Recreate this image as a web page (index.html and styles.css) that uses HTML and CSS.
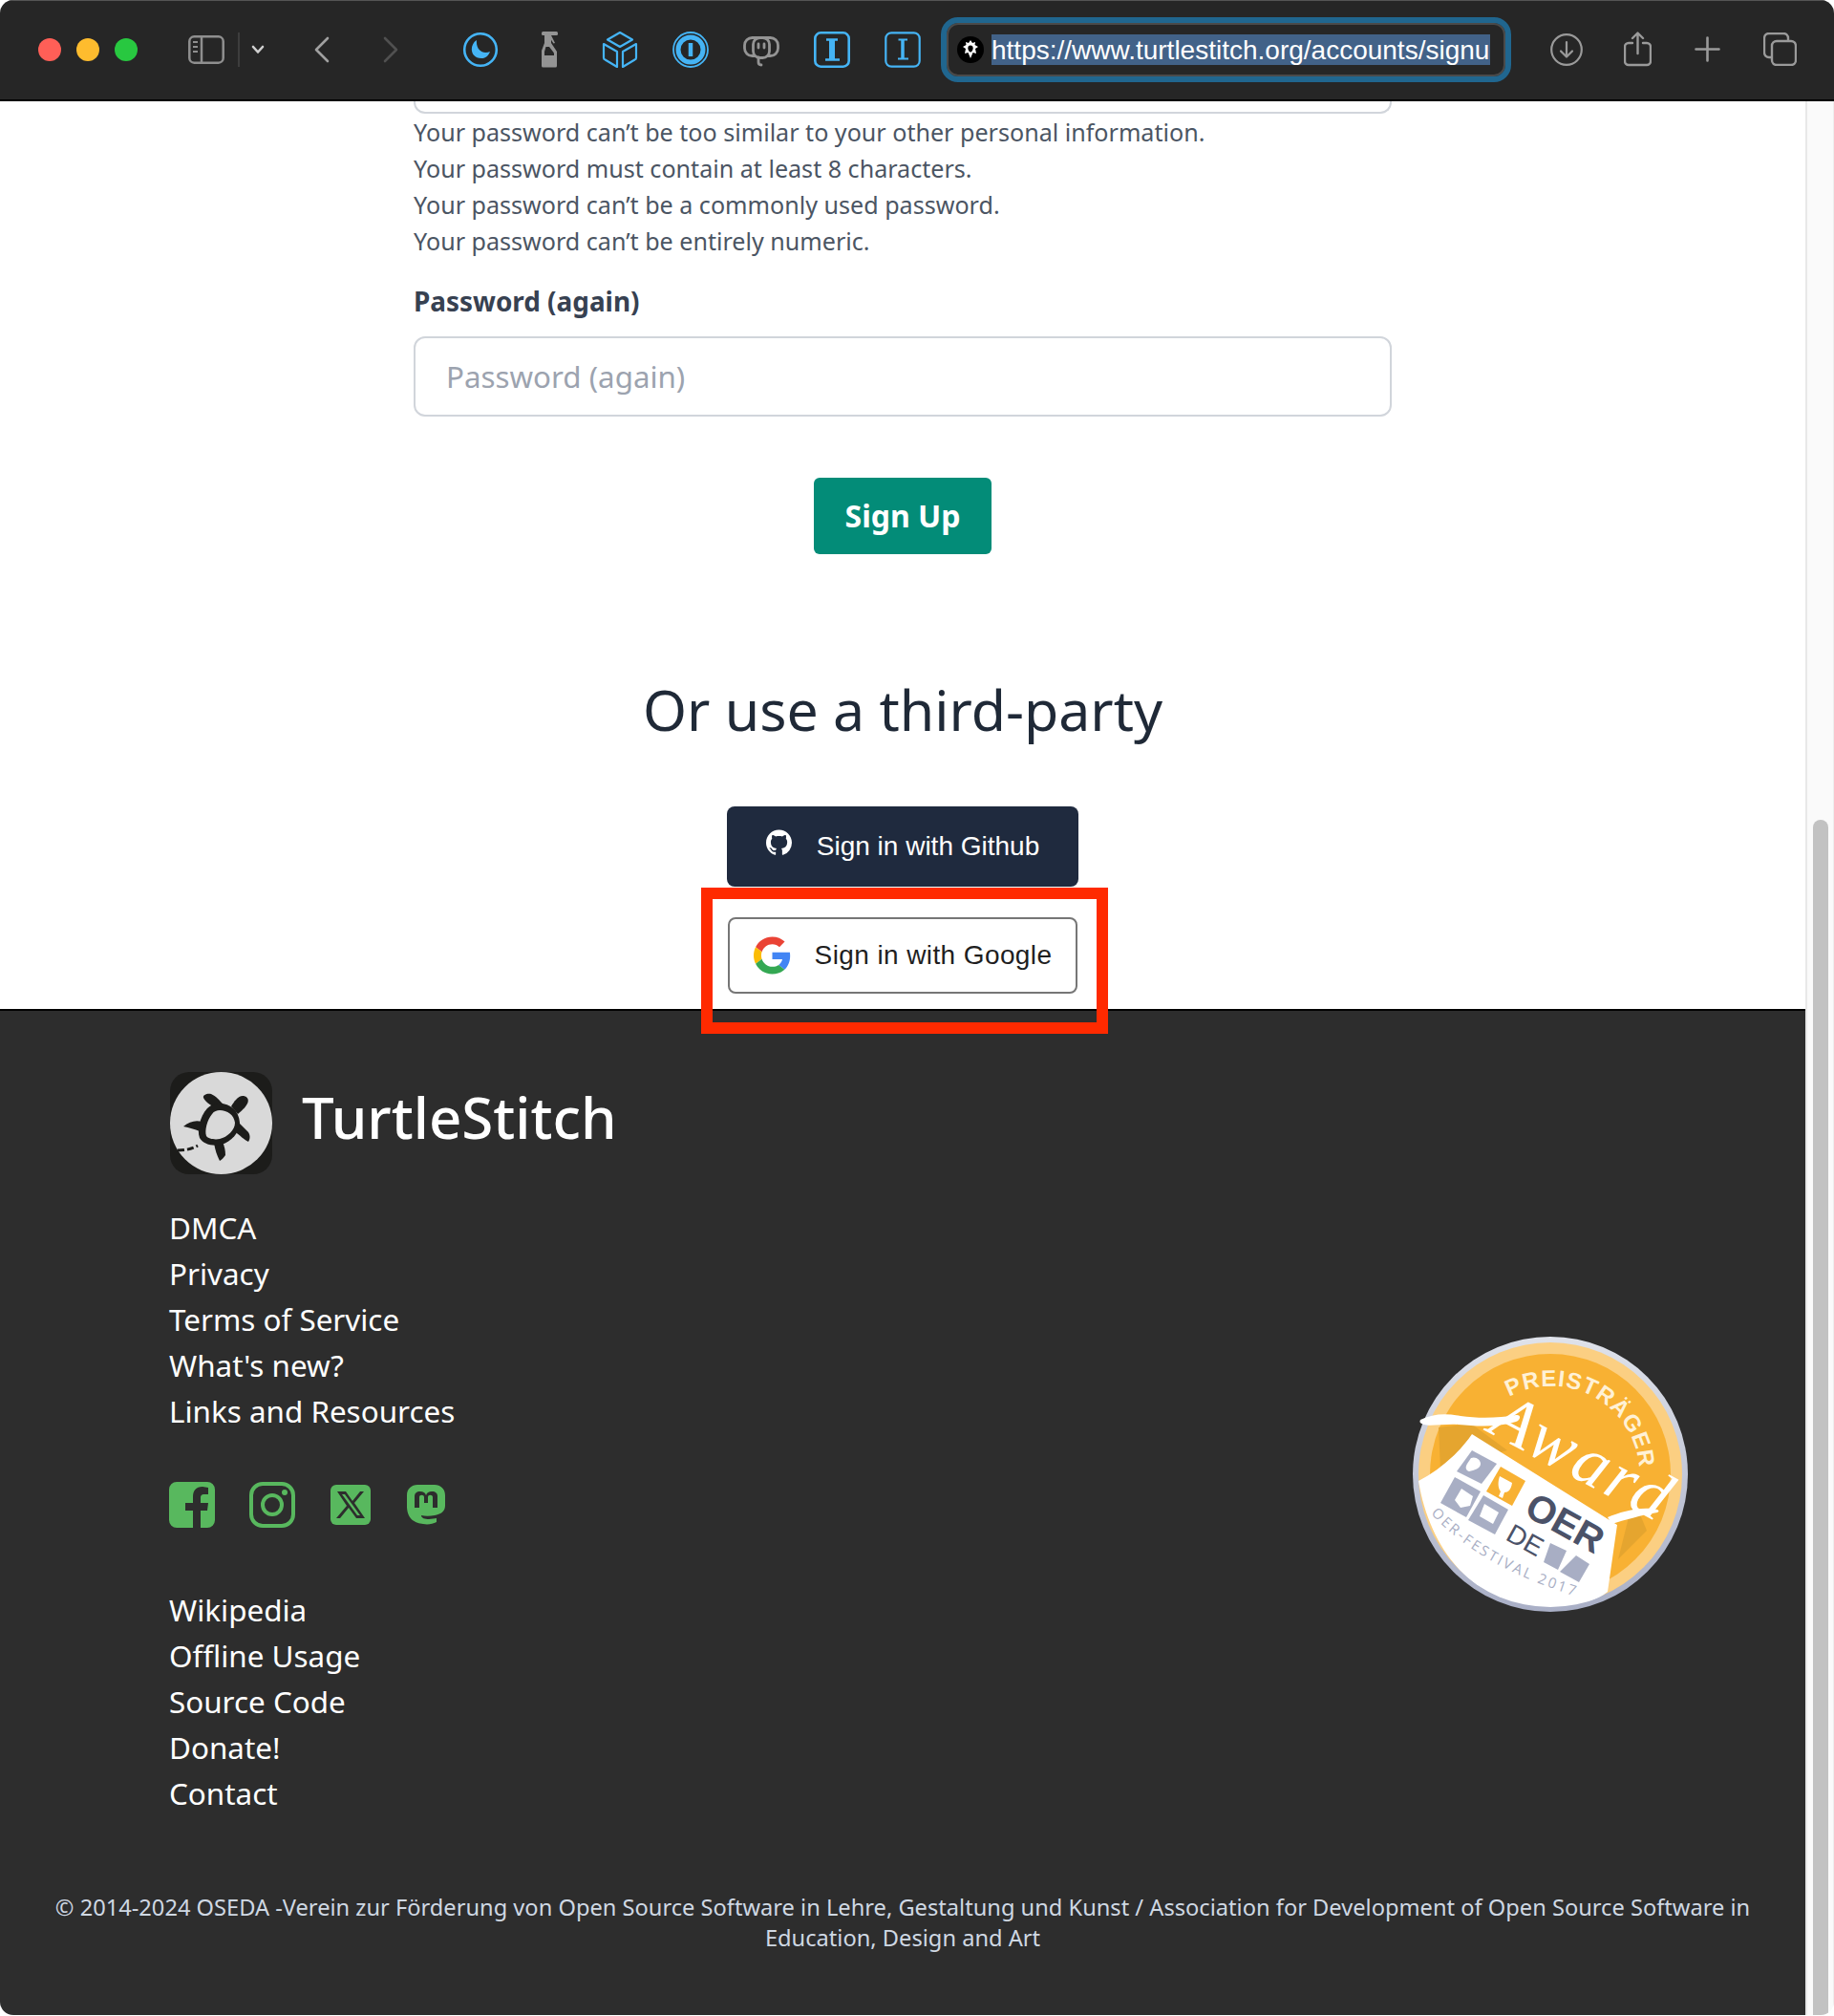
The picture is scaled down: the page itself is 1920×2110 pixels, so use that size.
FILE: index.html
```html
<!DOCTYPE html>
<html lang="en">
<head>
<meta charset="utf-8">
<title>TurtleStitch sign up</title>
<link rel="stylesheet" href="styles.css">
</head>
<body>
<div class="window">
  <header class="toolbar">
    <div class="lights"><span class="light red"></span><span class="light yellow"></span><span class="light green"></span></div>
    <svg class="ic-sidebar" width="38" height="30" viewBox="0 0 38 30" fill="none" stroke="#8f8f8f" stroke-width="2.500"><rect x="1.300" y="1.300" width="35.400" height="27.400" rx="5"/><path d="M14 1v28"/><path d="M5 7h5M5 12h5M5 17h5" stroke-width="2"/></svg>
    <span class="tb-sep"></span>
    <svg class="ic-chev" width="14" height="10" viewBox="0 0 14 10" fill="none" stroke="#d0d0d0" stroke-width="2.600" stroke-linecap="round" stroke-linejoin="round"><path d="M2 2l5 5.500L12 2"/></svg>
    <svg class="ic-back" width="16" height="28" viewBox="0 0 16 28" fill="none" stroke="#a0a0a0" stroke-width="2.600" stroke-linecap="round" stroke-linejoin="round"><path d="M14 2L2 14l12 12"/></svg>
    <svg class="ic-fwd" width="16" height="28" viewBox="0 0 16 28" fill="none" stroke="#505050" stroke-width="2.600" stroke-linecap="round" stroke-linejoin="round"><path d="M2 2l12 12L2 26"/></svg>
    <div class="tb-ext">
      <svg width="38" height="38" viewBox="0 0 38 38" fill="none"><circle cx="19" cy="19" r="16.800" stroke="#45b4f5" stroke-width="2.600"/><path d="M15 9C7 14 8 28 20 28c4 0 7-2 9-7-7 3-15-1-14-12z" fill="#45b4f5"/></svg>
      <svg class="ic-bottle" width="38" height="38" viewBox="0 0 38 38" fill="#949494"><rect x="11" y="0" width="17" height="4" rx="1.500"/><rect x="14" y="4" width="7" height="9"/><path d="M21 4l4 8-1.500.5-4-6z"/><path d="M14 12h7l6 9v15a1.500 1.500 0 0 1-1.500 1.500h-13A1.500 1.500 0 0 1 11 36V20z"/><path d="M15.500 16h3.500l5 6.500V34H14v-13z" fill="#262626"/><path d="M14 25h10v9H14z"/></svg>
      <svg width="38" height="38" viewBox="0 0 38 38" fill="none" stroke="#45b4f5" stroke-width="2.200" stroke-linejoin="round"><path d="M19 1l13 7.500L19 16 6 8.500zM2 13l14 8v16L3.500 29.500a2 2 0 0 1-1.500-2zM36 13l-14 8v16l12.500-7.500a2 2 0 0 0 1.500-2z"/></svg>
      <svg width="38" height="38" viewBox="0 0 38 38" fill="none" stroke="#45b4f5"><circle cx="19" cy="19" r="18" stroke-width="1.800"/><circle cx="19" cy="19" r="13" stroke-width="5"/><path d="M19 12v14" stroke-width="4.500"/></svg>
      <svg width="38" height="38" viewBox="0 0 38 38" fill="none" stroke="#949494" stroke-width="2.800" stroke-linecap="round"><rect x="1.500" y="6.500" width="35" height="19" rx="8"/><rect x="10.500" y="6.500" width="17" height="21" rx="7" fill="#262626"/><path d="M16 13v4M22 13v4M16 27v5q0 3 3 3"/></svg>
      <svg width="38" height="38" viewBox="0 0 38 38" fill="none"><rect x="1.300" y="1.300" width="35.400" height="35.400" rx="6" stroke="#45b4f5" stroke-width="2.600"/><path d="M13 8.500h12M12 29.500h15M19 8v22" stroke="#45b4f5" stroke-width="2.500"/><path d="M19 8v22" stroke="#45b4f5" stroke-width="6"/></svg>
      <svg width="38" height="38" viewBox="0 0 38 38" fill="none"><rect x="1.300" y="1.300" width="35.400" height="35.400" rx="6" stroke="#45b4f5" stroke-width="2.200"/><path d="M14.500 8.500h9.500M14 28.500h11" stroke="#45b4f5" stroke-width="2"/><path d="M19 8v21" stroke="#45b4f5" stroke-width="3.500"/></svg>
    </div>
    <div class="urlbar">
      <svg class="favicon" width="28" height="30" viewBox="0 0 28 30"><circle cx="14" cy="15" r="14" fill="#000"/><path d="M14 5l2 3 3-1-.5 3 3.500 2-3 2 1 5-3.500-1L14 24l-2.500-6-3.500 1 1-5-3-2 3.500-2L9 7l3 1z" fill="#fff"/><path d="M14 10.500c2.500 0 3 2 2.500 4s-1.500 3-2.500 3-2-1-2.500-3 0-4 2.500-4z" fill="#000"/></svg>
      <span class="url"><span class="url-text">https://www.turtlestitch.org/accounts/signup/</span></span>
    </div>
    <svg class="ic-dl" width="34" height="34" viewBox="0 0 34 34" fill="none" stroke="#9a9a9a" stroke-width="2.200" stroke-linecap="round" stroke-linejoin="round"><circle cx="17" cy="17" r="15.800"/><path d="M17 9v15M11 18.500l6 6 6-6"/></svg>
    <svg class="ic-share" width="29" height="37" viewBox="0 0 29 37" fill="none" stroke="#9a9a9a" stroke-width="2.400" stroke-linecap="round" stroke-linejoin="round"><path d="M9 12H5a4 4 0 0 0-4 4v15a4 4 0 0 0 4 4h19a4 4 0 0 0 4-4V16a4 4 0 0 0-4-4h-4"/><path d="M14.500 23V2M9 7l5.500-5.500L20 7"/></svg>
    <svg class="ic-plus" width="27" height="27" viewBox="0 0 27 27" fill="none" stroke="#9a9a9a" stroke-width="2.600" stroke-linecap="round"><path d="M13.500 1.500v24M1.500 13.500h24"/></svg>
    <svg class="ic-tabs" width="35" height="35" viewBox="0 0 35 35" fill="none" stroke="#9a9a9a" stroke-width="2.400"><rect x="9" y="9" width="25" height="25" rx="5"/><path d="M8.500 26H6a5 5 0 0 1-5-5V6a5 5 0 0 1 5-5h15a5 5 0 0 1 5 5v2.500"/></svg>
  </header>
  <div class="viewport">
    <div class="page">
      <main class="content">
        <div class="form">
          <div class="input-stub"></div>
          <ul class="help">
            <li>Your password can’t be too similar to your other personal information.</li>
            <li>Your password must contain at least 8 characters.</li>
            <li>Your password can’t be a commonly used password.</li>
            <li>Your password can’t be entirely numeric.</li>
          </ul>
          <label class="label" for="pw2">Password (again)</label>
          <input class="input" id="pw2" type="password" placeholder="Password (again)">
          <div class="submit-row"><button class="signup" type="button">Sign Up</button></div>
        </div>
        <h2 class="third">Or use a third-party</h2>
        <div class="socials">
          <a class="btn-github">
            <svg class="gh-mark" width="27" height="28" viewBox="0 0 16 16" fill="#fff"><path d="M8 0C3.580 0 0 3.580 0 8c0 3.540 2.290 6.530 5.470 7.590.4.070.55-.17.550-.38 0-.19-.01-.82-.01-1.490-2.010.37-2.530-.49-2.690-.94-.09-.23-.48-.94-.82-1.130-.28-.15-.68-.52-.01-.53.630-.01 1.080.58 1.230.82.720 1.210 1.870.87 2.330.66.070-.52.280-.87.510-1.070-1.780-.2-3.640-.89-3.640-3.950 0-.87.310-1.590.820-2.150-.08-.2-.36-1.020.08-2.120 0 0 .67-.21 2.200.82.640-.18 1.320-.27 2-.27s1.360.09 2 .27c1.530-1.040 2.200-.82 2.200-.82.440 1.100.160 1.920.080 2.120.51.560.82 1.270.82 2.150 0 3.070-1.870 3.750-3.650 3.950.29.250.54.730.54 1.480 0 1.070-.01 1.930-.01 2.200 0 .21.150.46.550.38A8.010 8.010 0 0 0 16 8c0-4.420-3.580-8-8-8z"/></svg>
            <span>Sign in with Github</span>
          </a>
          <span class="highlight">
            <a class="btn-google">
              <svg width="39" height="40" viewBox="0 0 48 48"><path fill="#EA4335" d="M24 9.500c3.540 0 6.710 1.220 9.210 3.600l6.850-6.850C35.900 2.380 30.470 0 24 0 14.620 0 6.510 5.380 2.560 13.220l7.980 6.190C12.430 13.720 17.740 9.500 24 9.500z"/><path fill="#4285F4" d="M46.980 24.550c0-1.570-.15-3.090-.38-4.550H24v9.020h12.940c-.58 2.960-2.260 5.480-4.780 7.180l7.730 6c4.510-4.180 7.090-10.360 7.090-17.650z"/><path fill="#FBBC05" d="M10.530 28.590c-.48-1.450-.76-2.990-.76-4.590s.27-3.140.76-4.590l-7.980-6.190C.92 16.460 0 20.120 0 24c0 3.880.92 7.540 2.560 10.780l7.970-6.190z"/><path fill="#34A853" d="M24 48c6.480 0 11.930-2.130 15.890-5.810l-7.730-6c-2.150 1.450-4.920 2.300-8.160 2.300-6.260 0-11.570-4.220-13.470-9.910l-7.980 6.190C6.510 42.620 14.620 48 24 48z"/></svg>
              <span>Sign in with Google</span>
            </a>
          </span>
        </div>
      </main>
      <footer class="footer">
        <div class="foot-main">
          <div class="foot-left">
            <div class="brand">
              <svg class="logo" width="107" height="107" viewBox="0 0 107 107">
                <rect width="107" height="107" rx="20" fill="#1c1c1a"/>
                <circle cx="53.500" cy="53.500" r="53.500" fill="#d9d9d9"/>
                <g fill="#1c1c1a">
                  <path d="M35 27c-1-3 4-5 8-4 5 2 9 7 13 11l-6 5c-5-3-13-7-15-12z"/>
                  <path d="M64 36c3-5 7-11 12-11 5 0 7 4 5 8-3 5-6 8-10 11z"/>
                  <path d="M71 52l11 11c2 3 2 7 0 10-5-3-10-7-14-11z"/>
                  <path d="M46 74l9-1c2 5 3 9 3 14-2 3-4 5-6 6-3-6-5-12-6-19z"/>
                  <path d="M33 52c-6-2-13 0-19 5 6 1 12 3 17 5z"/>
                  <path d="M52 33c11 0 20 7 21 20 0 10-9 20-19 23-9 2-19 0-23-7-3-8 0-22 8-31 4-4 9-5 13-5z"/>
                </g>
                <path d="M52 40c8 0 15 5 16 13 0 8-8 15-16 17-5 1-12 0-14-3-2-6 1-17 6-23 2-3 5-4 8-4z" fill="#d9d9d9"/>
                <path d="M8 82c7 0 14-1 21-5" fill="none" stroke="#1c1c1a" stroke-width="3" stroke-dasharray="7 3"/>
              </svg>
              <span class="brand-name">TurtleStitch</span>
            </div>
            <ul class="links">
              <li>DMCA</li><li>Privacy</li><li>Terms of Service</li><li>What's new?</li><li>Links and Resources</li>
            </ul>
            <div class="social-icons">
              <svg width="48" height="48" viewBox="0 0 48 48"><path fill="#58b85e" d="M8 0h32a8 8 0 0 1 8 8v32a8 8 0 0 1-8 8h-7V30h7l1-8h-8v-5c0-3 1-4 4-4h4V6c-2 0-4-1-6-1-7 0-10 4-10 11v6h-8v8h8v18H8a8 8 0 0 1-8-8V8a8 8 0 0 1 8-8z"/></svg>
              <svg width="48" height="48" viewBox="0 0 48 48" fill="none" stroke="#58b85e" stroke-width="4"><rect x="2" y="2" width="44" height="44" rx="12"/><circle cx="24" cy="24" r="10"/><circle cx="37" cy="11" r="3" fill="#58b85e" stroke="none"/></svg>
              <svg class="ic-x" width="42" height="42" viewBox="0 0 42 42"><rect width="42" height="42" rx="6" fill="#58b85e"/><path d="M7 7h9l7 10 8-10h4L25 19l11 16h-9l-8-11-9 11H6l11-13z M12 10l16 22h3L15 10z" fill="#2d2d2d" fill-rule="evenodd"/></svg>
              <svg class="ic-masto" width="40" height="42" viewBox="0 0 40 42"><path fill="#58b85e" d="M11 0h18c6 0 11 4 11 11v11c0 6-5 9-11 10-5 1-10 1-14 0 0 3 4 4 8 4 3 0 6-1 8-1v4c-4 2-9 3-14 2C9 40 1 37 0 24V11C0 4 5 0 11 0z"/><path fill="#2d2d2d" d="M8 24V12c0-3 2-5 6-5 3 0 5 1 6 4 1-3 3-4 6-4 4 0 6 2 6 5v12h-5V13c0-3-5-3-5 0v6h-4v-6c0-3-5-3-5 0v11z"/></svg>
            </div>
            <ul class="links second">
              <li>Wikipedia</li><li>Offline Usage</li><li>Source Code</li><li>Donate!</li><li>Contact</li>
            </ul>
          </div>
          <svg class="badge" width="290" height="290" viewBox="0 0 290 290">
            <defs>
              <path id="arcp" d="M102 64A92 92 0 0 1 238 150"/>
              <path id="arcf" d="M20 186Q70 242 176 274"/>
              <clipPath id="cc"><circle cx="145" cy="145" r="139"/></clipPath>
              <linearGradient id="rim" x1="0" y1="0" x2="0" y2="1"><stop offset="0" stop-color="#dfe2ea"/><stop offset="1" stop-color="#a9afc6"/></linearGradient>
            </defs>
            <circle cx="145" cy="145" r="144" fill="url(#rim)"/>
            <circle cx="145" cy="145" r="138" fill="#fbcf82"/>
            <circle cx="145" cy="145" r="126" fill="#f8b133"/>
            <path d="M28 96L62 92 100 120 30 140z" fill="#e5a52f"/>
            <path d="M232 170l14 34-30 30z" fill="#e5a52f"/>
            <path clip-path="url(#cc)" d="M7 152C30 140 50 122 63 103L215 198 205 268C190 280 165 285 145 285 70 285 20 230 7 152z" fill="#fff"/>
            <text class="badge-arc" fill="#fff1d6"><textPath href="#arcp">PREISTRÄGER</textPath></text>
            <path d="M9 88c12-6 26-7 42-4 20 3 42 2 58-1 6-1 5 5 0 7-20 6-40 5-60 3-14-1-30 2-36 0-5-1-5-3-4-5z" fill="#fff"/>
            <path d="M205 190c14-6 36-12 52-8 2 1 2 2 0 3-18 3-34 8-48 12z" fill="#fff"/>
            <text class="badge-script" transform="translate(78 100) rotate(28)" fill="#fff">Award</text>
            <polygon points="63,120 89,134 73,155 47,142" fill="#a8aec4"/>
            <polygon points="93,137 119,152 105,178 78,163" fill="#f8b133"/>
            <polygon points="45,148 72,163 57,190 30,175" fill="#a8aec4"/>
            <polygon points="75,167 101,182 87,208 59,193" fill="#a8aec4"/>
            <path d="M62 128c5-2 10 2 10 6 0 5-7 7-12 8-4-1-4-5-2-8z" fill="#fff"/>
            <path d="M92 147l13 7c-1 7-4 10-8 10l-2 6-4-2 2-5c-3-4-3-10-1-16z" fill="#fff"/>
            <path d="M52 160l12 8-3 10-10 2-6-8z" fill="#fff"/>
            <path d="M76 176l15 9-6 12-14-8z" fill="#fff"/>
            <text class="badge-oer" transform="translate(116 187) rotate(29)" fill="#4b5268">OER</text>
            <text class="badge-de" transform="translate(97 213) rotate(29)" fill="#4b5268">DE</text>
            <polygon points="145,217 162,225 153,245 138,237" fill="#a8aec4"/>
            <polygon points="172,230 186,239 175,258 155,247" fill="#a8aec4"/>
            <text class="badge-fest" fill="#a8aec4"><textPath href="#arcf">OER-FESTIVAL 2017</textPath></text>
          </svg>
        </div>
        <p class="copyright">© 2014-2024 OSEDA -Verein zur Förderung von Open Source Software in Lehre, Gestaltung und Kunst / Association for Development of Open Source Software in Education, Design and Art</p>
      </footer>
    </div>
    <div class="scrollbar"><div class="thumb"></div></div>
  </div>
</div>
</body>
</html>
```
FILE: styles.css
```css
* { box-sizing: border-box; }
html, body { margin: 0; padding: 0; }
body { width: 1920px; height: 2110px; overflow: hidden; background: #fff; font-family: "Noto Sans", sans-serif; }
ul { list-style: none; margin: 0; padding: 0; }
.window { display: flex; flex-direction: column; height: 2109px; border-radius: 14px; overflow: hidden; }

.toolbar { flex: 0 0 106px; display: flex; align-items: center; background: #262626; border-bottom: 2px solid #000; border-top: 1px solid #555; padding-bottom: 2px; }
.lights { display: flex; gap: 16px; margin-left: 40px; }
.light { width: 24px; height: 24px; border-radius: 50%; }
.red { background: #ff5f57; }
.yellow { background: #febc2e; }
.green { background: #28c840; }
.ic-sidebar { margin-left: 53px; flex: none; }
.tb-sep { flex: none; width: 2px; height: 36px; background: #3d3d3d; margin-left: 14px; }
.ic-chev { margin-left: 12px; flex: none; }
.ic-back { margin-left: 52px; flex: none; }
.ic-fwd { margin-left: 56px; flex: none; }
.tb-ext { display: flex; align-items: center; gap: 36px; margin-left: 67px; }
.ic-bottle { margin-left: -2px; }
.urlbar { flex: none; display: flex; align-items: center; width: 597px; height: 68px; margin-left: 21px; padding-left: 11px; background: #262626; border: 6px solid #20668f; border-radius: 18px; box-shadow: inset 0 0 0 2px #4a4a4a; }
.favicon { flex: none; }
.url { display: block; width: 522px; margin-left: 8px; height: 32px; line-height: 34px; background: #426288; color: #fff; font-family: "Liberation Sans", sans-serif; font-size: 28px; overflow: hidden; white-space: nowrap; }
.ic-dl { margin-left: 41px; flex: none; }
.ic-share { margin-left: 43px; flex: none; }
.ic-plus { margin-left: 45px; flex: none; }
.ic-tabs { margin-left: 45px; flex: none; }

.viewport { flex: 1; display: flex; min-height: 0; }
.page { flex: 1; min-width: 0; display: flex; flex-direction: column; min-height: 0; }
.content { flex: 0 0 952px; min-height: 0; background: #fff; border-bottom: 2px solid #000; }
.form { width: 1024px; margin: 0 auto; }
.input-stub { height: 13px; border: 2px solid #d1d5db; border-top: 0; border-radius: 0 0 12px 12px; }
.help { margin-top: 0; color: #4b5563; font-size: 25.1px; line-height: 38px; }
.label { display: block; margin-top: 25px; color: #374151; font-size: 27.9px; line-height: 38px; font-weight: 700; }
.input { display: block; width: 100%; height: 84px; margin-top: 18px; padding: 0 32px; border: 2px solid #d1d5db; border-radius: 12px; background: #fff; font-family: inherit; font-size: 31.3px; }
.input::placeholder { color: #9ca3af; opacity: 1; }
.submit-row { display: flex; justify-content: center; margin-top: 64px; }
.signup { width: 186px; height: 80px; border: 0; border-radius: 6px; padding: 0 0 2px; background: #038c78; color: #fff; font-family: inherit; font-size: 32px; font-weight: 700; }
.third { margin: 122px 0 0; text-align: center; color: #1f2937; font-size: 59px; line-height: 80px; font-weight: 400; }
.socials { display: flex; flex-direction: column; align-items: center; margin-top: 62px; }
.btn-github { display: flex; align-items: center; justify-content: center; gap: 26px; width: 368px; height: 84px; border-radius: 8px; background: #1f2a3e; color: #fff; font-family: "Liberation Sans", sans-serif; font-size: 28px; }
.gh-mark { margin-bottom: 8px; }
.highlight { display: block; width: 426px; height: 153px; margin: 1px 0 0 4px; padding: 19px 16px 0; border: 12px solid #ff2a00; position: relative; }
.btn-google { display: flex; align-items: center; justify-content: center; gap: 25px; width: 366px; height: 80px; border: 2px solid #767676; border-radius: 8px; background: #fff; color: #1f1f1f; font-family: "Liberation Sans", sans-serif; font-size: 28px; letter-spacing: .4px; }

.footer { flex: 1; min-height: 0; background: #2d2d2d; color: #fff; display: flex; flex-direction: column; }
.foot-main { display: flex; justify-content: space-between; align-items: flex-start; padding: 64px 122px 0 177px; }
.brand { display: flex; align-items: center; gap: 31px; }
.logo { margin-left: 1px; flex: none; }
.brand-name { font-size: 60px; font-weight: 500; line-height: 92px; margin-bottom: 14px; }
.links { margin-top: 32px; font-size: 31.4px; line-height: 48px; }
.social-icons { display: flex; align-items: center; margin-top: 50px; gap: 36px; }
.ic-x { margin-left: 1px; }
.ic-masto { margin-left: 2px; }
.links.second { margin-top: 62px; }
.badge { margin-top: 276px; flex: none; }
.badge-arc { font-family: "Liberation Sans", sans-serif; font-weight: 700; font-size: 24px; letter-spacing: 1px; }
.badge-script { font-family: "Liberation Serif", serif; font-style: italic; font-size: 72px; letter-spacing: 4px; }
.badge-oer { font-family: "Liberation Sans", sans-serif; font-weight: 700; font-size: 40px; }
.badge-de { font-family: "Liberation Sans", sans-serif; font-size: 28px; }
.badge-fest { font-family: "Open Sans", sans-serif; font-size: 15px; letter-spacing: 2.5px; }
.copyright { margin: 79px 0 0; padding: 0 40px; text-align: center; font-size: 23.65px; line-height: 32px; color: #cfd8e3; }

.scrollbar { flex: 0 0 30px; background: #fafafa; border-left: 2px solid #e8e8e8; border-right: 1px solid #eee; display: flex; flex-direction: column; padding: 752px 5px 0 6px; }
.thumb { flex: 1; background: #c2c2c2; border-radius: 8px 8px 0 0; }
```
